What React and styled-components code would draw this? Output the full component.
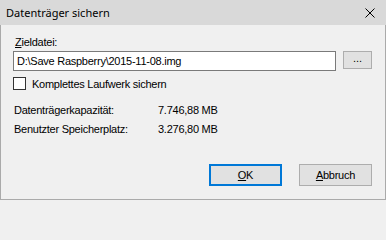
import React from "react";
import styled, { createGlobalStyle } from "styled-components";

const Global = createGlobalStyle`
  html, body { margin: 0; padding: 0; background: #f0f0f0; }
  body { font-family: "Liberation Sans", Arial, sans-serif; font-size: 11px; letter-spacing: -0.25px; color: #000; }
  * { box-sizing: border-box; }
`;

const Window = styled.div`
  width: 386px;
  height: 200px;
  display: flex;
  flex-direction: column;
  background: #f0f0f0;
  border: 1px solid #aaaaaa;
  border-top: none;
`;

const TitleBar = styled.div`
  height: 25px;
  flex: none;
  display: flex;
  align-items: center;
  justify-content: space-between;
  background: #d9d9d9;
  margin: 0 -1px;
  padding: 0 11px 0 6px;
`;

const Title = styled.span`
  font-family: "Noto Sans", "Open Sans", sans-serif;
  font-size: 11px;
  letter-spacing: 0;
  color: #000;
`;

const CloseButton = styled.button`
  width: 10px;
  height: 10px;
  border: none;
  background: transparent;
  padding: 0;
  display: flex;
  align-items: center;
  justify-content: center;
  svg { display: block; }
`;

const Body = styled.div`
  flex: 1;
  display: flex;
  flex-direction: column;
  padding: 10px 13px 0 12px;
`;

const Label = styled.label`
  display: block;
  height: 15px;
  line-height: 15px;
  padding-left: 2px;
`;

const Row = styled.div`
  display: flex;
  align-items: center;
  gap: ${p => p.$gap || 0}px;
  margin-top: ${p => p.$mt || 0}px;
`;

const TextInput = styled.input`
  width: 323px;
  height: 20px;
  border: 1px solid #7a7a7a;
  background: #fff;
  font: inherit;
  letter-spacing: inherit;
  padding: 0 3px;
  margin: 0;
  outline: none;
`;

const SmallButton = styled.button`
  width: 29px;
  height: 18px;
  border: 1px solid #adadad;
  background: #e1e1e1;
  font: inherit;
  padding: 0 0 4px;
  margin: 0 0 2px;
  line-height: 10px;
  color: #000;
`;

const CheckBox = styled.span`
  width: 13px;
  height: 13px;
  border: 1px solid #333;
  background: #fff;
  flex: none;
`;

const InfoGrid = styled.div`
  display: grid;
  grid-template-columns: 144px auto;
  row-gap: 6px;
  margin-top: 14px;
  padding-left: 1px;
  line-height: 13px;
`;

const Footer = styled.div`
  display: flex;
  justify-content: flex-end;
  gap: 17px;
  margin-top: auto;
  padding-bottom: 13px;
`;

const DialogButton = styled.button`
  width: 73px;
  height: 22px;
  background: #e1e1e1;
  border: ${p => (p.$default ? "2px solid #0078d7" : "1px solid #adadad")};
  font: inherit;
  letter-spacing: inherit;
  color: #000;
  padding: 0;
`;

export default function App() {
  return (
    <>
      <Global />
      <Window>
        <TitleBar>
          <Title>Datenträger sichern</Title>
          <CloseButton aria-label="Schließen">
            <svg width="10" height="10" viewBox="0 0 10 10">
              <path d="M0.5 0.5 L9.5 9.5 M9.5 0.5 L0.5 9.5" stroke="#000" strokeWidth="1" fill="none" />
            </svg>
          </CloseButton>
        </TitleBar>
        <Body>
          <Label><u>Z</u>ieldatei:</Label>
          <Row $gap={7} $mt={1}>
            <TextInput defaultValue="D:\Save Raspberry\2015-11-08.img" />
            <SmallButton>...</SmallButton>
          </Row>
          <Row $gap={6} $mt={6}>
            <CheckBox />
            <span>Komplettes Laufwerk sichern</span>
          </Row>
          <InfoGrid>
            <span>Datenträgerkapazität:</span>
            <span>7.746,88 MB</span>
            <span>Benutzter Speicherplatz:</span>
            <span>3.276,80 MB</span>
          </InfoGrid>
          <Footer>
            <DialogButton $default><u>O</u>K</DialogButton>
            <DialogButton><u>A</u>bbruch</DialogButton>
          </Footer>
        </Body>
      </Window>
    </>
  );
}
